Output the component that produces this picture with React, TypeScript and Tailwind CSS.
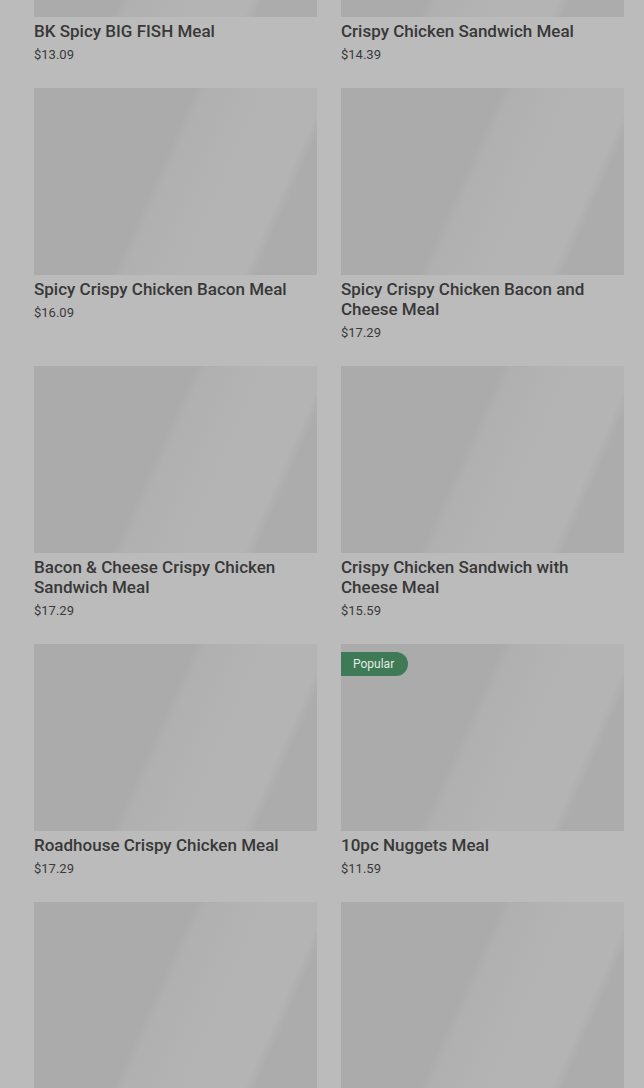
import React from 'react';

interface MenuItem {
  name: string;
  price: string;
  badge?: string;
}

const items: MenuItem[] = [
  { name: 'BK Spicy BIG FISH Meal', price: '$13.09' },
  { name: 'Crispy Chicken Sandwich Meal', price: '$14.39' },
  { name: 'Spicy Crispy Chicken Bacon Meal', price: '$16.09' },
  { name: 'Spicy Crispy Chicken Bacon and Cheese Meal', price: '$17.29' },
  { name: 'Bacon & Cheese Crispy Chicken Sandwich Meal', price: '$17.29' },
  { name: 'Crispy Chicken Sandwich with Cheese Meal', price: '$15.59' },
  { name: 'Roadhouse Crispy Chicken Meal', price: '$17.29' },
  { name: '10pc Nuggets Meal', price: '$11.59', badge: 'Popular' },
  { name: 'Whopper Meal', price: '$13.49' },
  { name: 'Double Whopper Meal', price: '$15.79' },
];

function MenuCard({ item }: { item: MenuItem }) {
  return (
    <div className="flex flex-col">
      <div className="relative h-[187px] w-full bg-[linear-gradient(114deg,#ababab_0%,#ababab_44%,#b0b0b0_47%,#b4b4b4_64%,#b4b4b4_80%,#acacac_83%,#acacac_100%)]">
        {item.badge && (
          <span className="absolute left-0 top-2 flex h-6 items-center rounded-r-full bg-[#3d7a55] pl-3 pr-[14px] text-[12px] text-[#e4ece6]">
            {item.badge}
          </span>
        )}
      </div>
      <h3 className="mt-1 text-[17px] font-medium leading-5 text-[#383838]">{item.name}</h3>
      <p className="mt-[5px] text-[13px] leading-[18px] text-[#3a3a3a]">{item.price}</p>
    </div>
  );
}

export default function App() {
  return (
    <div
      className="h-[1088px] w-full overflow-hidden bg-[#bbbbbb]"
      style={{ fontFamily: 'Roboto, "Liberation Sans", sans-serif' }}
    >
      <div className="-mt-[170px] grid grid-cols-2 gap-x-6 gap-y-6 pl-[34px] pr-[20px]">
        {items.map((item) => (
          <MenuCard key={item.name} item={item} />
        ))}
      </div>
    </div>
  );
}
